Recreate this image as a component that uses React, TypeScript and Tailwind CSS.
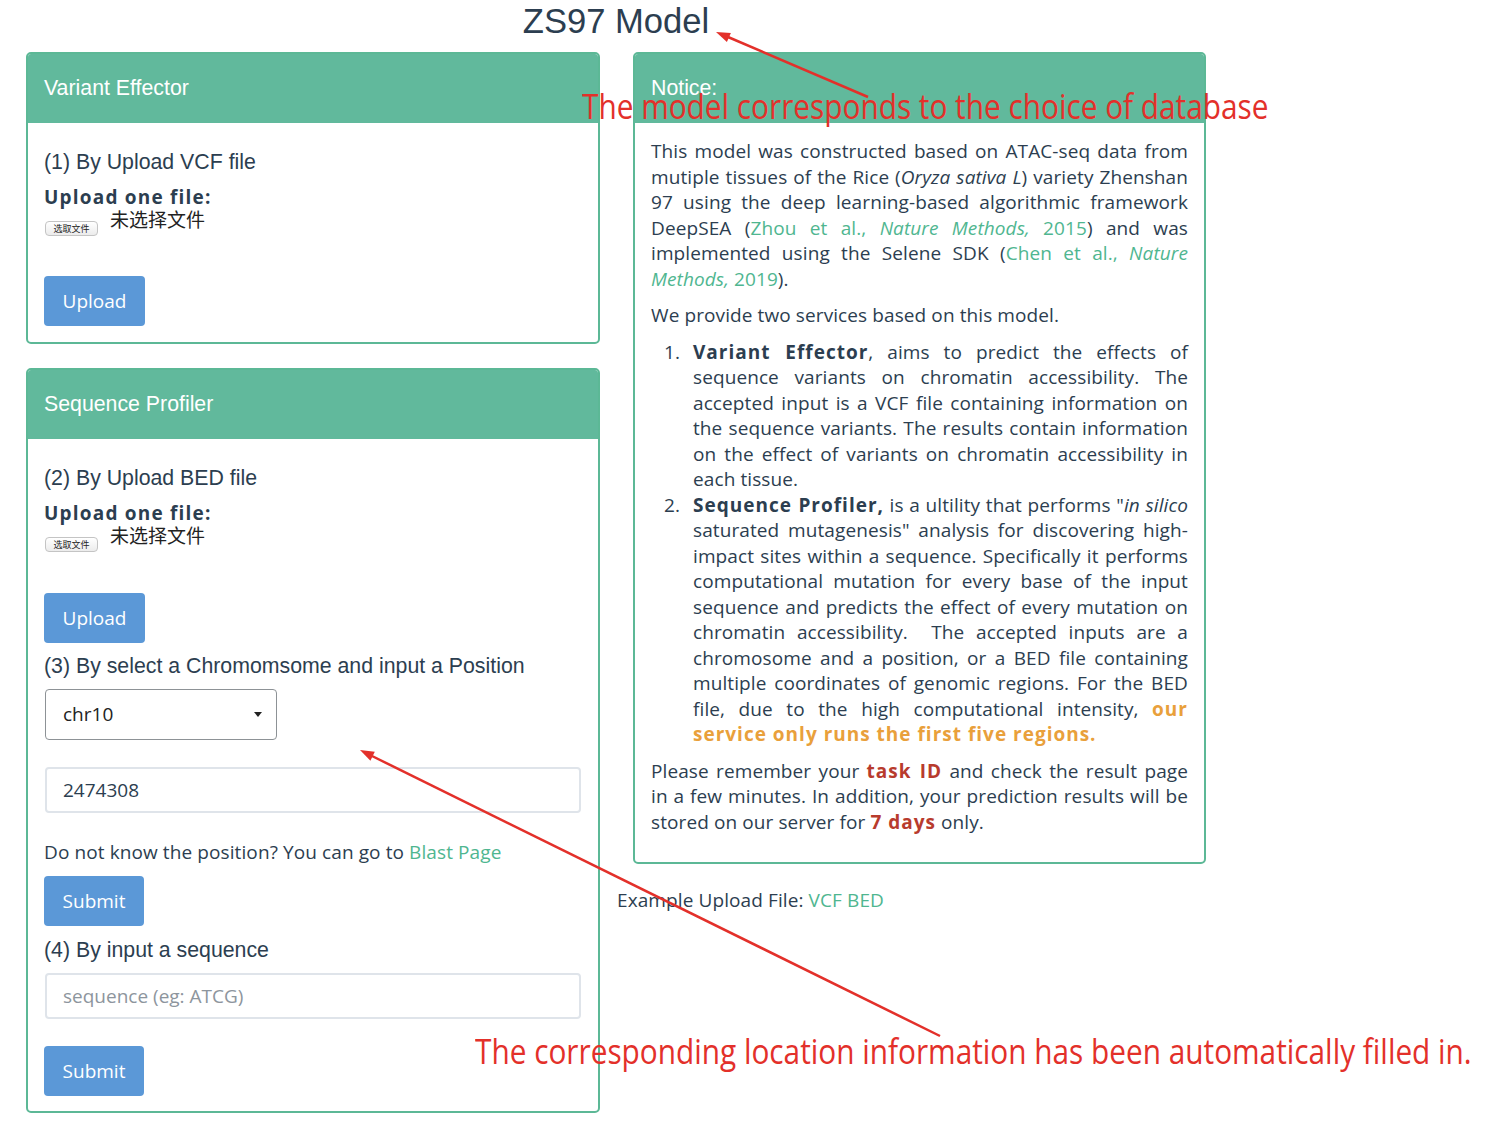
import React from "react";

const body = { fontFamily: '"Open Sans", "Noto Sans", sans-serif' };
const helv = { fontFamily: '"Liberation Sans", Arial, sans-serif' };
const cjk = { fontFamily: '"Noto Sans CJK SC", "Noto Sans", sans-serif' };

function PanelHeader({ title }: { title: string }) {
  return (
    <div
      className="h-[69px] bg-[#61b99c] flex items-center px-[16px] pt-[1px] text-white text-[21.3px]"
      style={helv}
    >
      {title}
    </div>
  );
}

function Heading({ children, className = "" }: { children: React.ReactNode; className?: string }) {
  return (
    <div className={"h-[24px] leading-[24px] text-[21.3px] text-[#2c3e50] " + className} style={helv}>
      {children}
    </div>
  );
}

function FileBlock() {
  return (
    <>
      <div
        className="mt-[11px] h-[24px] leading-[24px] text-[19px] font-bold tracking-[1.2px] text-[#2c3e50]"
        style={body}
      >
        Upload one file:
      </div>
      <div className="flex items-start h-[30px]">
        <span
          className="mt-[12px] ml-[1px] h-[15px] w-[53px] flex items-center justify-center rounded-[4px] border border-[#c4c4c4] bg-gradient-to-b from-white to-[#ececec] text-[9px] leading-none text-[#222]"
          style={cjk}
        >
          选取文件
        </span>
        <span className="ml-[12px] mt-[-2px] leading-[24px] text-[19px] text-[#222]" style={cjk}>
          未选择文件
        </span>
      </div>
    </>
  );
}

function Btn({ label, className = "" }: { label: string; className?: string }) {
  return (
    <div
      className={
        "h-[50px] rounded-[4px] bg-[#5b98d7] text-white text-[19px] flex items-center justify-center " +
        className
      }
      style={body}
    >
      {label}
    </div>
  );
}

function Panel({ title, children, className = "" }: { title: string; children: React.ReactNode; className?: string }) {
  return (
    <div className={"border-2 border-[#5cb896] rounded-[5px] overflow-hidden bg-white " + className}>
      <PanelHeader title={title} />
      {children}
    </div>
  );
}

const link = "text-[#4fb690]";

export default function App() {
  return (
    <div className="relative w-[1490px] h-[1126px] bg-white overflow-hidden">
      <div className="w-[1232px] px-[26px]">
        <div className="h-[42px] pt-[1px] text-center text-[34.6px] leading-[40px] text-[#2c3e50]" style={helv}>
          ZS97 Model
        </div>
        <div className="mt-[10px] flex gap-[17px] items-start">
          {/* left column */}
          <div className="w-[574px] flex flex-col">
            <Panel title="Variant Effector">
              <div className="px-[16px] pt-[27px] pb-[16px]">
                <Heading>(1) By Upload VCF file</Heading>
                <FileBlock />
                <Btn label="Upload" className="mt-[37px] w-[101px]" />
              </div>
            </Panel>
            <Panel title="Sequence Profiler" className="mt-[24px]">
              <div className="px-[16px] pt-[27px] pb-[15px]">
                <Heading>(2) By Upload BED file</Heading>
                <FileBlock />
                <Btn label="Upload" className="mt-[38px] w-[101px]" />
                <Heading className="mt-[11px]">(3) By select a Chromomsome and input a Position</Heading>
                <div className="mt-[11px] ml-[1px] w-[232px] h-[51px] rounded-[4px] border-[1.5px] border-[#8d9296] flex items-center justify-between pl-[17px] pr-[14px]">
                  <span className="text-[19px] text-[#222]" style={body}>
                    chr10
                  </span>
                  <span className="w-0 h-0 border-l-[4px] border-r-[4px] border-t-[5px] border-l-transparent border-r-transparent border-t-[#222]" />
                </div>
                <div
                  className="mt-[27px] ml-[1px] w-[536px] h-[46px] rounded-[4px] border-2 border-[#dfe4ea] flex items-center pl-[16px] text-[19px] text-[#2c3e50]"
                  style={body}
                >
                  2474308
                </div>
                <div
                  className="mt-[27px] h-[24px] leading-[24px] text-[19px] tracking-[0.1px] text-[#2c3e50] whitespace-nowrap"
                  style={body}
                >
                  Do not know the position? You can go to <span className={link}>Blast Page</span>
                </div>
                <Btn label="Submit" className="mt-[12px] w-[100px]" />
                <Heading className="mt-[12px]">(4) By input a sequence</Heading>
                <div
                  className="mt-[11px] ml-[1px] w-[536px] h-[46px] rounded-[4px] border-2 border-[#dfe4ea] flex items-center pl-[16px] text-[19px] text-[#8d959d]"
                  style={body}
                >
                  sequence (eg: ATCG)
                </div>
                <Btn label="Submit" className="mt-[27px] w-[100px]" />
              </div>
            </Panel>
          </div>

          {/* right column */}
          <div className="flex flex-col">
            <Panel title="Notice:" className="ml-[16px] w-[573px]">
              <div
                className="px-[16px] pt-[16px] pb-[27px] text-[19px] tracking-[0.1px] leading-[25.5px] text-[#2c3e50] text-justify"
                style={body}
              >
                <p className="mb-[11px]">
                  This model was constructed based on ATAC-seq data from mutiple tissues of the Rice (
                  <i>Oryza sativa L</i>) variety Zhenshan 97 using the deep learning-based algorithmic framework
                  DeepSEA (
                  <span className={link}>
                    Zhou et al., <i>Nature Methods,</i> 2015
                  </span>
                  ) and was implemented using the Selene SDK (
                  <span className={link}>
                    Chen et al., <i>Nature Methods,</i> 2019
                  </span>
                  ).
                </p>
                <p className="mb-[11px]">We provide two services based on this model.</p>
                <ol className="mb-[11px]">
                  <li className="flex">
                    <span className="w-[42px] shrink-0 text-right pr-[13px]">1.</span>
                    <div className="flex-1 min-w-0">
                      <b className="tracking-[1px]">Variant Effector</b>, aims to predict the effects of sequence
                      variants on chromatin accessibility. The accepted input is a VCF file containing information on
                      the sequence variants. The results contain information on the effect of variants on chromatin
                      accessibility in each tissue.
                    </div>
                  </li>
                  <li className="flex">
                    <span className="w-[42px] shrink-0 text-right pr-[13px]">2.</span>
                    <div className="flex-1 min-w-0">
                      <b className="tracking-[1px]">Sequence Profiler,</b> is a ultility that performs "
                      <i>in silico</i> saturated mutagenesis" analysis for discovering high-impact sites within a
                      sequence. Specifically it performs computational mutation for every base of the input sequence
                      and predicts the effect of every mutation on chromatin accessibility.&nbsp; The accepted inputs
                      are a chromosome and a position, or a BED file containing multiple coordinates of genomic
                      regions. For the BED file, due to the high computational intensity,{" "}
                      <b className="tracking-[1px] text-[#e9a03b]">our service only runs the first five regions.</b>
                    </div>
                  </li>
                </ol>
                <p>
                  Please remember your <b className="tracking-[1px] text-[#b83b2d]">task ID</b> and check the result
                  page in a few minutes. In addition, your prediction results will be stored on our server for{" "}
                  <b className="tracking-[1px] text-[#b83b2d]">7 days</b> only.
                </p>
              </div>
            </Panel>
            <div className="mt-[24px] h-[24px] leading-[24px] text-[19px] tracking-[0.1px] text-[#2c3e50]" style={body}>
              Example Upload File: <span className={link}>VCF BED</span>
            </div>
          </div>
        </div>
      </div>

      {/* annotations */}
      <div
        className="absolute left-[582px] top-[84px] text-[34px] leading-[44px] text-[#e3302a] whitespace-nowrap origin-left scale-x-[0.876]"
        style={body}
      >
        The model corresponds to the choice of database
      </div>
      <div
        className="absolute left-[475px] top-[1029px] text-[34px] leading-[44px] text-[#e3302a] whitespace-nowrap origin-left scale-x-[0.876]"
        style={body}
      >
        The corresponding location information has been automatically filled in.
      </div>
      <svg className="absolute left-0 top-0 pointer-events-none" width="1490" height="1126">
        <line x1="868" y1="97" x2="728" y2="37" stroke="#e3302a" strokeWidth="2.5" />
        <polygon points="716,32 730.9,32.9 726.9,42.1" fill="#e3302a" />
        <line x1="940" y1="1036" x2="372" y2="756" stroke="#e3302a" strokeWidth="2.5" />
        <polygon points="360,750 374.8,751.7 370.4,760.7" fill="#e3302a" />
      </svg>
    </div>
  );
}
